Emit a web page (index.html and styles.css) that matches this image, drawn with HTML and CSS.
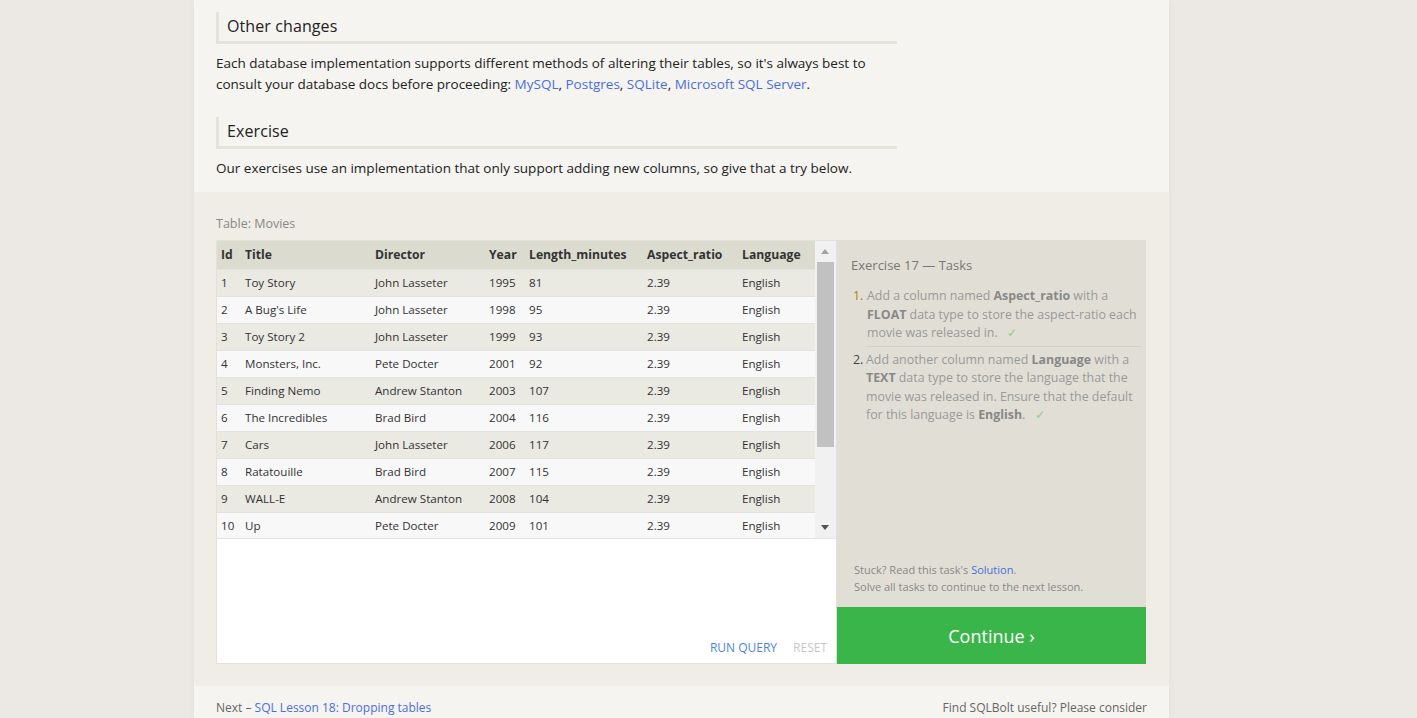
FILE: index.html
```html
<!DOCTYPE html>
<html>
<head>
<meta charset="utf-8">
<link rel="stylesheet" href="styles.css">
</head>
<body>
<div class="page">
  <div class="lesson">
    <h3 class="heading">Other changes</h3>
    <p class="text">Each database implementation supports different methods of altering their tables, so it's always best to consult your database docs before proceeding: <a href="#">MySQL</a>, <a href="#">Postgres</a>, <a href="#">SQLite</a>, <a href="#">Microsoft SQL Server</a>.</p>
    <h3 class="heading">Exercise</h3>
    <p class="text">Our exercises use an implementation that only support adding new columns, so give that a try below.</p>
  </div>
  <div class="exercise">
    <div class="table-label">Table: Movies</div>
    <div class="widget">
      <div class="left">
        <div class="results">
          <div class="table-wrap">
            <table class="movies">
              <thead>
                <tr><th class="c-id">Id</th><th class="c-title">Title</th><th class="c-dir">Director</th><th class="c-year">Year</th><th class="c-len">Length_minutes</th><th class="c-asp">Aspect_ratio</th><th class="c-lang">Language</th></tr>
              </thead>
              <tbody>
                <tr><td>1</td><td>Toy Story</td><td>John Lasseter</td><td>1995</td><td>81</td><td>2.39</td><td>English</td></tr>
                <tr><td>2</td><td>A Bug's Life</td><td>John Lasseter</td><td>1998</td><td>95</td><td>2.39</td><td>English</td></tr>
                <tr><td>3</td><td>Toy Story 2</td><td>John Lasseter</td><td>1999</td><td>93</td><td>2.39</td><td>English</td></tr>
                <tr><td>4</td><td>Monsters, Inc.</td><td>Pete Docter</td><td>2001</td><td>92</td><td>2.39</td><td>English</td></tr>
                <tr><td>5</td><td>Finding Nemo</td><td>Andrew Stanton</td><td>2003</td><td>107</td><td>2.39</td><td>English</td></tr>
                <tr><td>6</td><td>The Incredibles</td><td>Brad Bird</td><td>2004</td><td>116</td><td>2.39</td><td>English</td></tr>
                <tr><td>7</td><td>Cars</td><td>John Lasseter</td><td>2006</td><td>117</td><td>2.39</td><td>English</td></tr>
                <tr><td>8</td><td>Ratatouille</td><td>Brad Bird</td><td>2007</td><td>115</td><td>2.39</td><td>English</td></tr>
                <tr><td>9</td><td>WALL-E</td><td>Andrew Stanton</td><td>2008</td><td>104</td><td>2.39</td><td>English</td></tr>
                <tr><td>10</td><td>Up</td><td>Pete Docter</td><td>2009</td><td>101</td><td>2.39</td><td>English</td></tr>
              </tbody>
            </table>
          </div>
          <div class="scrollbar">
            <div class="arrow up"></div>
            <div class="thumb"></div>
            <div class="track"></div>
            <div class="arrow down"></div>
          </div>
        </div>
        <div class="editor">
          <div class="actions">
            <span class="run">RUN QUERY</span>
            <span class="reset">RESET</span>
          </div>
        </div>
      </div>
      <div class="right">
        <div class="tasks">
          <div class="tasks-title">Exercise 17 — Tasks</div>
          <ol class="task-list">
            <li class="task first"><span class="num">1.</span><span class="task-text">Add a column named <b>Aspect_ratio</b> with a <b>FLOAT</b> data type to store the aspect-ratio each movie was released in. <span class="check">✓</span></span></li>
            <li class="task"><span class="num">2.</span><span class="task-text">Add another column named <b>Language</b> with a <b>TEXT</b> data type to store the language that the movie was released in. Ensure that the default for this language is <b>English</b>. <span class="check">✓</span></span></li>
          </ol>
          <div class="stuck">
            <div>Stuck? Read this task's <a href="#">Solution</a>.</div>
            <div>Solve all tasks to continue to the next lesson.</div>
          </div>
        </div>
        <div class="continue">Continue ›</div>
      </div>
    </div>
  </div>
  <div class="footer">
    <div>Next – <a href="#">SQL Lesson 18: Dropping tables</a></div>
    <div>Find SQLBolt useful? Please consider</div>
  </div>
</div>
</body>
</html>
```

FILE: styles.css
```css
html, body {
  margin: 0;
  padding: 0;
}
body {
  background: #ece9e5;
  font-family: "Open Sans", "Noto Sans", sans-serif;
  color: #222;
  overflow: hidden;
}
a {
  color: #4a6fdc;
  text-decoration: none;
}
.page {
  width: 975px;
  margin-left: 194px;
  background: #f5f4f0;
  box-shadow: 0 0 8px rgba(0,0,0,0.05);
  min-height: 718px;
}
.lesson {
  padding: 12px 272px 0 22px;
}
.heading {
  margin: 0;
  font-weight: normal;
  font-size: 16px;
  line-height: 20px;
  padding: 4px 10px 5px 8px;
  border-left: 3px solid #e5e3da;
  border-bottom: 3px solid #e5e3da;
  color: #222;
  letter-spacing: 0.1px;
}
.text {
  margin: 9px 0 22px 0;
  font-size: 13.5px;
  line-height: 21px;
  color: #222;
}
.text:last-child {
  margin-bottom: 0;
  padding-bottom: 13px;
}
.exercise {
  background: #efede6;
  border-radius: 3px;
  padding: 23px 22px 22px 22px;
}
.table-label {
  font-size: 12.5px;
  color: #888;
  line-height: 18px;
  margin-bottom: 7px;
}
.widget {
  display: flex;
  height: 424px;
}
.left {
  width: 619px;
  border: 1px solid #e3e1da;
  background: #fff;
  display: flex;
  flex-direction: column;
}
.results {
  display: flex;
  height: 297px;
  border-bottom: 1px solid #e3e3e3;
}
.table-wrap {
  width: 598px;
  overflow: hidden;
}
.movies {
  width: 598px;
  border-collapse: collapse;
  table-layout: fixed;
  font-size: 11.6px;
  color: #333;
}
.movies th,
.movies td {
  box-sizing: border-box;
}
.movies th {
  background: #dcdbd0;
  font-weight: bold;
  font-size: 12.2px;
  text-align: left;
  height: 28px;
  padding: 0 0 0 4px;
  color: #333;
  white-space: nowrap;
}
.movies td {
  height: 27px;
  padding: 0 0 0 4px;
  border-top: 1px solid #e2e2e0;
  white-space: nowrap;
}
.movies tbody tr:nth-child(odd) td {
  background: #eae9e2;
}
.movies tbody tr:nth-child(even) td {
  background: #f8f8f8;
}
.c-id { width: 24px; }
.c-title { width: 130px; }
.c-dir { width: 114px; }
.c-year { width: 40px; }
.c-len { width: 118px; }
.c-asp { width: 95px; }
.c-lang { width: 77px; }
.scrollbar {
  width: 21px;
  background: #f1f1f1;
  display: flex;
  flex-direction: column;
}
.arrow {
  height: 21px;
  position: relative;
}
.arrow::after {
  content: "";
  position: absolute;
  left: 6px;
  border-left: 4px solid transparent;
  border-right: 4px solid transparent;
}
.arrow.up::after {
  top: 8px;
  border-bottom: 5px solid #a3a3a3;
}
.arrow.down::after {
  top: 8px;
  border-top: 5px solid #505050;
}
.thumb {
  height: 185px;
  margin: 0 2px 0 2px;
  background: #c1c1c1;
}
.track {
  flex: 1;
}
.editor {
  flex: 1;
  display: flex;
  flex-direction: column;
  justify-content: flex-end;
}
.actions {
  display: flex;
  justify-content: flex-end;
  gap: 16px;
  padding: 0 9px 7px 0;
  font-size: 12px;
  line-height: 16px;
}
.run {
  color: #4a86e0;
}
.reset {
  color: #c8c8c8;
}
.right {
  width: 309px;
  display: flex;
  flex-direction: column;
}
.tasks {
  flex: 1;
  background: #e1dfd5;
  padding: 16px 5px 12px 14px;
  display: flex;
  flex-direction: column;
}
.tasks-title {
  font-size: 13px;
  color: #777;
  line-height: 18px;
}
.task-list {
  list-style: none;
  margin: 13px 0 0 0;
  padding: 0;
}
.task {
  display: flex;
  font-size: 12.4px;
  line-height: 18.5px;
  color: #999;
  padding: 0 0 3px 2px;
}
.task + .task {
  border-top: 1px solid #d3d1c8;
  margin-left: 15px;
  padding: 4px 0 0 0;
}
.task + .task .num {
  margin-left: -13px;
  width: 13px;
}
.num {
  width: 14px;
  flex: none;
  color: #444;
}
.first .num {
  color: #b07a12;
}
.task b {
  color: #888;
}
.check {
  color: #8ccf8c;
  margin-left: 6px;
}
.stuck {
  margin-top: auto;
  padding-left: 3px;
  font-size: 11px;
  line-height: 17px;
  color: #888;
}
.continue {
  height: 57px;
  background: #3ab54a;
  color: #fff;
  font-size: 18px;
  display: flex;
  align-items: center;
  justify-content: center;
}
.footer {
  display: flex;
  justify-content: space-between;
  padding: 13px 22px 0 22px;
  font-size: 12px;
  line-height: 18px;
  color: #666;
}
```
